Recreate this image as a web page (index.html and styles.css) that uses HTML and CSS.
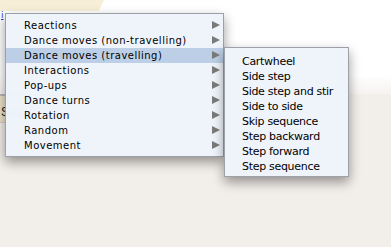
FILE: index.html
```html
<!DOCTYPE html>
<html>
<head>
<meta charset="utf-8">
<link rel="stylesheet" href="styles.css">
</head>
<body>
<div class="page">
  <div class="top">
    <div class="tab"></div>
    <a class="link" href="#">i</a>
  </div>
  <div class="lower">
    <div class="stopbar"><span class="stop">Stop</span></div>
  </div>

  <ul class="menu main">
    <li class="item">Reactions<span class="arrow"></span></li>
    <li class="item">Dance moves (non-travelling)<span class="arrow"></span></li>
    <li class="item sel">Dance moves (travelling)<span class="arrow"></span></li>
    <li class="item">Interactions<span class="arrow"></span></li>
    <li class="item">Pop-ups<span class="arrow"></span></li>
    <li class="item">Dance turns<span class="arrow"></span></li>
    <li class="item">Rotation<span class="arrow"></span></li>
    <li class="item">Random<span class="arrow"></span></li>
    <li class="item">Movement<span class="arrow"></span></li>
  </ul>

  <ul class="menu sub">
    <li class="item">Cartwheel</li>
    <li class="item">Side step</li>
    <li class="item">Side step and stir</li>
    <li class="item">Side to side</li>
    <li class="item">Skip sequence</li>
    <li class="item">Step backward</li>
    <li class="item">Step forward</li>
    <li class="item">Step sequence</li>
  </ul>
</div>
</body>
</html>
```

FILE: styles.css
```css
* { box-sizing: border-box; }
html, body { margin: 0; padding: 0; }
body {
  width: 391px;
  height: 247px;
  overflow: hidden;
  background: #f2eeea;
  font-family: "DejaVu Sans", Verdana, sans-serif;
}
.page {
  position: relative;
  width: 391px;
  height: 247px;
}
.top {
  height: 94px;
  background: linear-gradient(#ffffff 80%, #f6f3f0);
}
.tab {
  width: 104px;
  height: 11px;
  background: #f6eed6;
  clip-path: polygon(0 0, 100% 0, 95% 100%, 0 100%);
}
.link {
  display: block;
  width: 6px;
  padding-left: 1px;
  color: #2a3fd0;
  font-size: 9px;
  line-height: 9px;
  text-decoration: underline;
}
.stopbar {
  height: 29px;
  width: 60px;
  background: #ebe2c9;
  border-top: 2px solid #b9b9bd;
  border-bottom: 1px solid #d8d0bd;
  display: flex;
  align-items: flex-end;
  padding-bottom: 3px;
}
.stop {
  font-family: "Liberation Sans", Arial, sans-serif;
  font-size: 12px;
  color: #222;
  padding-left: 1px;
}

.menu {
  position: absolute;
  margin: 0;
  list-style: none;
  background: rgba(239, 244, 251, 0.98);
  border: 1px solid #9ca1a8;
  box-shadow: 0 5px 11px rgba(0, 0, 0, 0.4);
}
.main {
  left: 5px;
  top: 13px;
  width: 219px;
  padding: 4px 0 3px;
  font-size: 10px;
  letter-spacing: 0.5px;
}
.sub {
  left: 224px;
  top: 47px;
  width: 125px;
  padding: 6px 0 2px;
  font-size: 11px;
  letter-spacing: -0.3px;
}
.item {
  height: 15px;
  line-height: 15px;
  color: #000;
  position: relative;
  white-space: nowrap;
}
.main .item { padding-left: 18px; }
.sub .item { padding-left: 17px; }
.sel { background: #bccfe6; }
.arrow {
  position: absolute;
  right: 3px;
  top: 3px;
  width: 0;
  height: 0;
  border-top: 4px solid transparent;
  border-bottom: 4px solid transparent;
  border-left: 8px solid #7a7a7a;
}
```
